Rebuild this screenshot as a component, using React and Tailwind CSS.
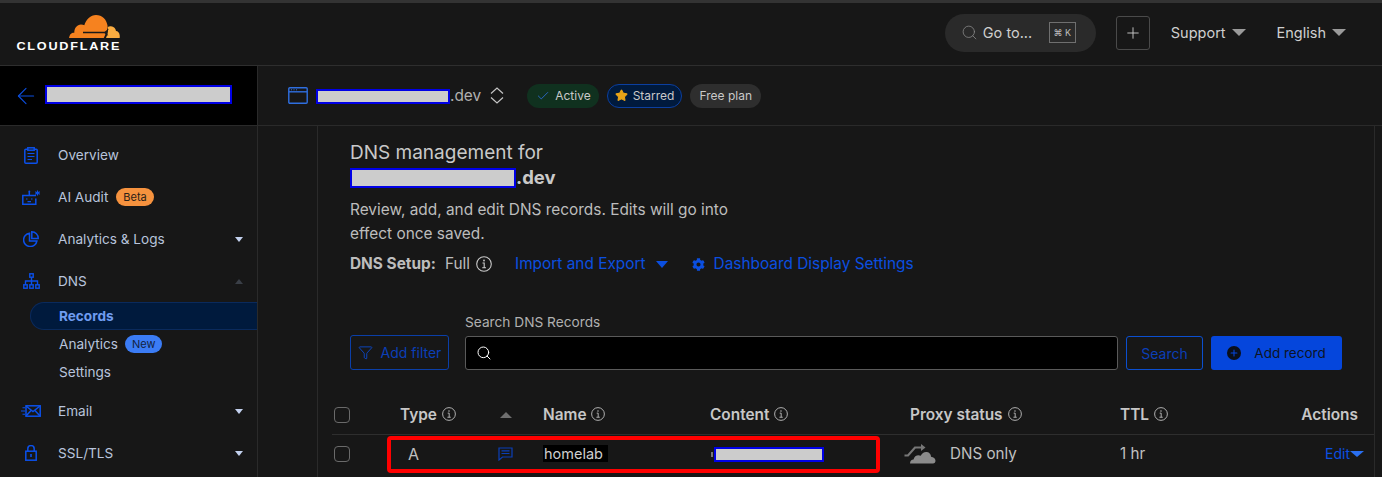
import React from 'react';
import { ArrowLeft, Check, Filter, Plus, Search, Star } from 'lucide-react';
import { FaCog } from 'react-icons/fa';

const Redacted = ({ className }) => (
  <span className={`block shrink-0 bg-[#cccccc] border-2 border-[#0000e6] ${className}`} />
);

const Caret = ({ className }) => (
  <span className={`inline-block w-0 h-0 border-x-transparent ${className}`} />
);

const CloudflareLogo = () => (
  <div className="flex flex-col items-end w-[106px]">
    <svg width="51" height="24" viewBox="0 0 51 24" className="mr-[1px]">
      <path fill="#f6821f" d="M0 23c.4-2.600 1.600-4.600 3.800-5.200.3-.1.9-.2 1.500-.1C5.300 13 8 9.400 12 9.400c1.400 0 2.500.4 3.300.9C17 4.500 21.600 0 27 0c6.100 0 10.800 4.600 11.500 10.600.2 1.500 0 3.400-.8 5.100-.8 2.500-1.900 5-2.900 7.300z" />
      <path fill="#fbad41" d="M37 23c1-2.400 1.700-4.400 1.900-6.300.2-1.700.1-3.300-.2-4.600 1-.7 2.300-1 3.300-.8 2.800.3 4.700 2.300 5 4.700 1.800.2 3.500 1.500 3.700 4.200.1.900.1 1.800 0 2.800z" />
      <path fill="#1a1a1a" d="M14 16.800h21.500l4.500-3-2.600 3.600 2 3.600-4-2.800H14z" />
    </svg>
    <span className="text-[11.5px] font-bold tracking-[1.6px] leading-[14px] text-white font-['Liberation_Sans',sans-serif] scale-x-110 origin-right whitespace-nowrap">
      CLOUDFLARE
    </span>
  </div>
);

const OverviewIcon = () => (
  <svg width="14" height="17" viewBox="0 0 14 17" fill="none" stroke="#0b50ea" strokeWidth="1.500">
    <rect x=".8" y="2.200" width="12.400" height="14" rx="1" />
    <rect x="3.800" y=".8" width="6.400" height="2.400" fill="#171717" />
    <path d="M3.500 6.500h7M3.500 9.500h7M3.500 12.500h4.500" strokeWidth="1.200" />
  </svg>
);

const AuditIcon = () => (
  <svg width="19" height="15" viewBox="0 0 19 15" fill="none" stroke="#0b50ea" strokeWidth="1.500">
    <path d="M14 5.500H.8v8.700h13V8.500" />
    <path d="M7.300 5.500V2" />
    <circle cx="7.300" cy="1.500" r="1" fill="#0b50ea" stroke="none" />
    <path d="M4 9h1.500M9 9h1.500M5.500 11.700h3.500" strokeWidth="1.200" />
    <path d="M15.500 .5v5M13.200 1.700l4.600 2.600M17.800 1.700l-4.600 2.600" strokeWidth="1.100" />
  </svg>
);

const PieIcon = () => (
  <svg width="16" height="16" viewBox="0 0 16 16" fill="none" stroke="#0b50ea" strokeWidth="1.500">
    <path d="M6.500 2.200a6.700 6.700 0 1 0 7.400 7.800H6.500z" />
    <path d="M8.800 .8a6.500 6.500 0 0 1 6.400 6.700H8.800z" />
  </svg>
);

const TreeIcon = () => (
  <svg width="17" height="16" viewBox="0 0 17 16" fill="none" stroke="#0b50ea" strokeWidth="1.400">
    <rect x="6.800" y=".8" width="3.400" height="3.400" />
    <rect x=".8" y="11.800" width="3.400" height="3.400" />
    <rect x="6.800" y="11.800" width="3.400" height="3.400" />
    <rect x="12.800" y="11.800" width="3.400" height="3.400" />
    <path d="M8.500 4.200v7.600M2.500 11.800V8h12v3.800" />
  </svg>
);

const MailIcon = () => (
  <svg width="20" height="12" viewBox="0 0 20 12" fill="none" stroke="#0b50ea" strokeWidth="1.500">
    <rect x="5" y=".8" width="14.200" height="10.400" />
    <path d="M5 1l7 5.500L19 1M5 11l5.500-6M19 11l-5.500-6" />
    <path d="M1.500 2.800h2.500M0 6h4M1.500 9.200h2.500" strokeWidth="1.100" />
  </svg>
);

const LockIcon = () => (
  <svg width="12" height="16" viewBox="0 0 12 16" fill="none" stroke="#0b50ea" strokeWidth="1.500">
    <rect x=".8" y="6.200" width="10.400" height="9" />
    <path d="M2.800 6.200V3.800a3.200 3.200 0 0 1 6.400 0v2.400" />
    <rect x="5.200" y="9" width="1.600" height="3" fill="#0b50ea" stroke="none" />
  </svg>
);

const WindowIcon = () => (
  <svg width="20" height="17" viewBox="0 0 20 17" fill="none" stroke="#2f6fe0" strokeWidth="1.400">
    <rect x=".8" y=".8" width="18.400" height="15.400" rx="1" />
    <path d="M.8 4.800h18.400" />
    <path d="M3 2.800h1M5.500 2.800h1M8 2.800h1" strokeWidth="1" />
  </svg>
);

const UpDownIcon = () => (
  <svg width="14" height="17" viewBox="0 0 14 17" fill="none" stroke="#c5c5c5" strokeWidth="1.200">
    <path d="M1 6.500L7 1l6 5.500M1 10.500L7 16l6-5.500" />
  </svg>
);

const ProxyCloud = () => (
  <svg width="32" height="20" viewBox="0 0 32 20" className="text-[#8b8b8b] shrink-0">
    <path fill="none" stroke="#777777" strokeWidth="2.200" d="M.5 11.500h3.500L11 3.500h7" />
    <path fill="#777777" d="M17 0l4.500 3.500L17 7z" />
    <path fill="currentColor" d="M6 19.500c0-2.500 1.500-4 3.500-4 .5-2.800 2.800-4.300 5-4.300.8 0 1.500.2 2.200.5C18 9 20.500 7.500 23 8c2.500.5 4 2.400 4 4.800 2.500.2 4.500 1.800 4.500 4 0 1.500-1 2.700-2.500 2.700z" />
  </svg>
);

const ChatIcon = () => (
  <svg width="15" height="14" viewBox="0 0 15 14" fill="none" stroke="#0b3fb8" strokeWidth="1.200" className="-ml-[2px]">
    <path d="M1 1h13v9H4.500L1 13z" />
    <path d="M3.500 3.800h8M3.500 6.500h8" />
  </svg>
);

// serif "i" in a ring, lucide's Info has a plain stem
const InfoMark = ({ size = 14, className = 'text-[#b5b5b5]' }) => (
  <svg width={size} height={size} viewBox="0 0 16 16" fill="none" stroke="currentColor" strokeWidth="1.100" className={`shrink-0 ${className}`}>
    <circle cx="8" cy="8" r="7.300" />
    <circle cx="8" cy="4.500" r=".9" fill="currentColor" stroke="none" />
    <path d="M6.500 7h1.700v4.600M6.200 11.700h3.800" />
  </svg>
);

const NavItem = ({ icon, label, badge, caret }) => (
  <div className="flex items-center h-[42px]">
    <span className="w-[58px] flex justify-center pl-[4px] shrink-0">{icon}</span>
    <span className="text-[13.6px] text-[#b8c4dc]">{label}</span>
    {badge}
    {caret === 'down' && <Caret className="ml-auto mr-[14px] border-x-[4px] border-t-[5px] border-t-[#c3d1ee]" />}
    {caret === 'up' && <Caret className="ml-auto mr-[14px] border-x-[4px] border-b-[5px] border-b-[#3a3f47]" />}
  </div>
);

const SubItem = ({ label, badge }) => (
  <div className="flex items-center h-[28px] pl-[59px] text-[13.6px] text-[#b8c4dc]">
    {label}
    {badge}
  </div>
);

const Sidebar = () => (
  <aside className="w-[258px] shrink-0 border-r border-[#2a2a2a] pt-[8px]">
    <NavItem icon={<OverviewIcon />} label="Overview" />
    <NavItem
      icon={<AuditIcon />}
      label="AI Audit"
      badge={<span className="ml-[8px] h-[18px] px-[7px] rounded-full bg-[#f6923e] text-[11px] leading-[18px] text-[#2a2118]">Beta</span>}
    />
    <NavItem icon={<PieIcon />} label="Analytics & Logs" caret="down" />
    <NavItem icon={<TreeIcon />} label="DNS" caret="up" />
    <div className="flex flex-col">
      <div className="ml-[30px] h-[28px] flex items-center pl-[28px] rounded-l-full bg-[#001a3d] border border-r-0 border-[#0a2a5c] text-[13.6px] font-bold text-[#6f9cf0]">
        Records
      </div>
      <SubItem
        label="Analytics"
        badge={<span className="ml-[7px] h-[18px] px-[7px] rounded-full bg-[#3b7cf5] text-[11px] leading-[18px] text-[#12233f]">New</span>}
      />
      <SubItem label="Settings" />
    </div>
    <div className="mt-[4px]">
      <NavItem icon={<MailIcon />} label="Email" caret="down" />
      <NavItem icon={<LockIcon />} label="SSL/TLS" caret="down" />
    </div>
  </aside>
);

const Header = () => (
  <header className="h-[63px] shrink-0 border-b border-[#2e2e2e] flex items-center pl-[15px]">
    <CloudflareLogo />
    <div className="ml-auto flex items-center text-[#cfcfcf] text-[14.5px] pb-[3px]">
      <div className="w-[151px] h-[38px] rounded-full bg-[#2a2a2a] flex items-center pl-[16px] pr-[20px]">
        <Search size={17} strokeWidth={1.100} className="text-[#8a8a8a]" />
        <span className="ml-[5px]">Go to...</span>
        <span className="ml-auto w-[27px] h-[21px] border border-[#6f6f6f] text-[9px] flex items-center justify-center text-[#bdbdbd]">⌘ K</span>
      </div>
      <div className="ml-[20px] w-[34px] h-[34px] border border-[#4a4a4a] rounded-[3px] flex items-center justify-center">
        <Plus size={18} strokeWidth={1.200} />
      </div>
      <span className="ml-[21px]">Support</span>
      <Caret className="ml-[6px] border-x-[7px] border-t-[7px] border-t-[#9a9a9a]" />
      <span className="ml-[31px]">English</span>
      <Caret className="ml-[6px] border-x-[7px] border-t-[7px] border-t-[#9a9a9a]" />
      <span className="w-[36px]" />
    </div>
  </header>
);

const ZoneBar = () => (
  <div className="h-[60px] shrink-0 flex items-center pl-[30px] border-b border-[#2a2a2a] text-[15.4px] text-[#b5b5b5]">
    <WindowIcon />
    <Redacted className="ml-[8px] w-[134px] h-[15px] mt-[2px]" />
    <span className="text-[#b0b0b0]">.dev</span>
    <span className="ml-[9px] flex"><UpDownIcon /></span>
    <span className="ml-[23px] h-[24px] pl-[9px] pr-[8px] rounded-full bg-[#10311f] flex items-center text-[12px] text-[#c9c9c9]">
      <Check size={14} strokeWidth={1.400} className="text-[#2f6fe0] mr-[5px]" />
      Active
    </span>
    <span className="ml-[8px] h-[24px] px-[7px] rounded-full bg-[#001a3d] border border-[#0b3fa0] flex items-center text-[12px] text-[#c9c9c9]">
      <Star size={13} fill="#e8a317" stroke="#e8a317" className="mr-[5px]" />
      Starred
    </span>
    <span className="ml-[8px] h-[24px] px-[9px] rounded-full bg-[#2e2e2e] flex items-center text-[12px] text-[#c9c9c9]">Free plan</span>
  </div>
);

const columns = 'grid grid-cols-[50px_118px_43px_167px_200px_210px_1fr]';

const RecordsTable = () => (
  <div className="ml-[-18px] mr-[-32px] mt-[25px]">
    <div className={`${columns} h-[40px] items-center border-b border-[#2e2e2e] text-[15.4px] font-semibold text-[#c7c7c7]`}>
      <span className="ml-[2px] w-[16px] h-[16px] border border-[#6a6a6a] rounded-[4px]" />
      <span className="pl-[18px] flex items-center gap-[5px]">Type <InfoMark /></span>
      <Caret className="border-x-[6.500px] border-b-[6px] border-b-[#6f6f6f]" />
      <span className="flex items-center gap-[5px]">Name <InfoMark /></span>
      <span className="flex items-center gap-[5px]">Content <InfoMark /></span>
      <span className="flex items-center gap-[5px]">Proxy status <InfoMark /></span>
      <span className="flex items-center justify-between pr-[16px]">
        <span className="flex items-center gap-[5px]">TTL <InfoMark /></span>
        <span>Actions</span>
      </span>
    </div>
    <div className={`${columns} h-[38px] items-center text-[15.2px] text-[#c0c0c0] relative`}>
      <span className="ml-[2px] w-[16px] h-[16px] border border-[#6a6a6a] rounded-[4px]" />
      <span className="pl-[26px] text-[16px]">A</span>
      <ChatIcon />
      <span className="text-[14.5px]"><span className="bg-black text-[#cfcfcf] pl-[1px] pr-[5px]">homelab</span></span>
      <span className="flex items-center">
        <span className="w-[2px] h-[5px] ml-[1px] bg-[#777777]" />
        <Redacted className="ml-[1px] w-[110px] h-[15px]" />
      </span>
      <span className="flex items-center gap-[14px] -ml-[6px]"><ProxyCloud />DNS only</span>
      <span className="flex items-center justify-between pr-[10px]">
        1 hr
        <span className="flex items-center text-[14px] text-[#0b4fe0]">Edit<Caret className="border-x-[7px] border-t-[6px] border-t-[#2a6ff0]" /></span>
      </span>
      <span className="absolute left-[55px] top-[1px] w-[493px] h-[37px] border-[4px] border-[#ff0000] rounded-[4px]" />
    </div>
  </div>
);

const Content = () => (
  <main className="flex-1 min-w-0 flex min-h-0 pr-[7px]">
    <div className="w-[60px] shrink-0 border-r border-[#2a2a2a]" />
    <div className="flex-1 min-w-0 border-r border-[#2a2a2a] pl-[32px] pr-[32px] pt-[15px]">
      <h1 className="text-[19px] leading-[24px] text-[#c9c9c9]">DNS management for</h1>
      <div className="flex items-center h-[26px] text-[18.500px] font-bold text-[#c9c9c9]">
        <Redacted className="w-[166px] h-[20px]" />
        .dev
      </div>
      <p className="mt-[7px] w-[390px] text-[15.4px] leading-[24px] text-[#bdbdbd]">
        Review, add, and edit DNS records. Edits will go into effect once saved.
      </p>
      <div className="flex items-center h-[24px] mt-[6px] text-[15.4px] text-[#bdbdbd]">
        <span className="font-bold">DNS Setup:</span>
        <span className="ml-[9px]">Full</span>
        <InfoMark size={16} className="ml-[6px] text-[#c9c9c9]" />
        <span className="ml-[23px] text-[#0b4fe0]">Import and Export</span>
        <Caret className="ml-[10px] border-x-[6.500px] border-t-[7px] border-t-[#0b4fe0]" />
        <FaCog size={13} className="ml-[24px] text-[#0b4fe0]" />
        <span className="ml-[9px] text-[#0b4fe0]">Dashboard Display Settings</span>
      </div>
      <div className="flex items-end mt-[38px] text-[14px]">
        <button className="w-[99px] h-[35px] border border-[#0b3fa8] rounded-[3px] flex items-center justify-center gap-[8px] text-[#0b3fb8]">
          <Filter size={15} strokeWidth={1.300} className="text-[#0b4fe0]" />
          Add filter
        </button>
        <div className="ml-[16px] w-[653px]">
          <div className="text-[13.7px] leading-[16px] mb-[6px] text-[#b0b0b0]">Search DNS Records</div>
          <div className="h-[34px] bg-black border border-[#5a5a5a] rounded-[3px] flex items-center pl-[10px]">
            <Search size={16} strokeWidth={1.500} className="text-white" />
          </div>
        </div>
        <button className="ml-[8px] w-[77px] h-[34px] border border-[#0b4fd0] rounded-[3px] text-[#0b3fb8]">Search</button>
        <button className="ml-[8px] w-[131px] h-[34px] bg-[#0546dc] rounded-[3px] flex items-center justify-center gap-[13px] text-[13.500px] text-[#0d1424]">
          <span className="w-[14px] h-[14px] rounded-full bg-[#0a0f1a] flex items-center justify-center">
            <Plus size={10} strokeWidth={2.500} className="text-[#0546dc]" />
          </span>
          Add record
        </button>
      </div>
      <RecordsTable />
    </div>
  </main>
);

export default function App() {
  return (
    <div className="w-[1382px] h-[477px] overflow-hidden flex flex-col bg-[#171717] font-['Inter',sans-serif] border-t-[3px] border-[#333333]">
      <Header />
      <div className="flex h-[60px] shrink-0">
        <div className="w-[258px] shrink-0 bg-black border-r border-[#2a2a2a] border-b flex items-center pl-[13px]">
          <ArrowLeft size={26} strokeWidth={1} className="text-[#0b4fe0]" />
          <Redacted className="ml-[6px] w-[187px] h-[19px] -mt-[3px]" />
        </div>
        <div className="flex-1 min-w-0"><ZoneBar /></div>
      </div>
      <div className="flex flex-1 min-h-0">
        <Sidebar />
        <Content />
      </div>
    </div>
  );
}
